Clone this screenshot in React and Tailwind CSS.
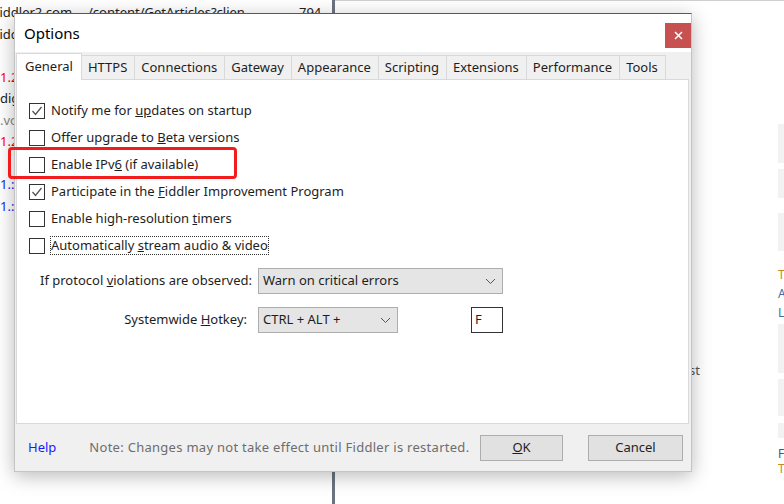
import React from "react";

// Background rows of the session list, mostly hidden behind the dialog
const sessionRows = [
  { text: "fiddler2.com", color: "text-[#222]", shift: true },
  { text: "fiddler2.com", color: "text-[#222]", shift: true },
  { text: "", color: "text-[#222]" },
  { text: "1.2.3", color: "text-[#f00]" },
  { text: "digicert.com", color: "text-[#222]" },
  { text: ".vo", color: "text-[#888]" },
  { text: "1.2.3", color: "text-[#f00]" },
  { text: "", color: "text-[#222]" },
  { text: "1.:", color: "text-[#1a1aff]" },
  { text: "1.:", color: "text-[#1a1aff]" },
];

const tabs = [
  "General",
  "HTTPS",
  "Connections",
  "Gateway",
  "Appearance",
  "Scripting",
  "Extensions",
  "Performance",
  "Tools",
];

function Check({ checked }) {
  return (
    <span className="flex h-[16px] w-[16px] shrink-0 items-center justify-center border border-[#333] bg-white">
      {checked && (
        <svg width="12" height="12" viewBox="0 0 12 12">
          <polyline
            points="1.5,6 4.5,9.5 10.5,2"
            fill="none"
            stroke="#555"
            strokeWidth="1.3"
          />
        </svg>
      )}
    </span>
  );
}

function Chevron() {
  return (
    <svg width="11" height="7" viewBox="0 0 11 7">
      <polyline points="1,1 5.5,5.5 10,1" fill="none" stroke="#555" strokeWidth="1" />
    </svg>
  );
}

function OptionRow({ checked, children, focus }) {
  return (
    <div className="flex h-[27px] items-center">
      <Check checked={checked} />
      <span
        className={
          "ml-[6px] leading-[17px] " +
          (focus ? "outline outline-1 outline-dotted outline-[#333]" : "")
        }
      >
        {children}
      </span>
    </div>
  );
}

export default function App() {
  return (
    <div
      className="relative h-[504px] w-[784px] overflow-hidden bg-white text-[13px] text-[#1e1e1e]"
      style={{ fontFamily: '"Noto Sans", "Open Sans", sans-serif' }}
    >
      {/* background: session list | splitter | inspector */}
      <div className="flex h-full">
        <div className="w-[332px] overflow-hidden">
          <div className="mt-[2px]">
            {sessionRows.map((row, i) => (
              <div key={i} className={"flex h-[21.5px] items-center whitespace-nowrap " + row.color}>
                <span className={"w-[80px] " + (row.shift ? "-ml-[5px]" : "")}>{row.text}</span>
                {i === 0 && (
                  <>
                    <span className="ml-[13px] w-[205px] text-[#222]">/content/GetArticles?clien</span>
                    <span className="ml-[6px] text-[#222]">794</span>
                  </>
                )}
              </div>
            ))}
          </div>
        </div>
        <div className="w-[3px] bg-[#6b7480]" />
        <div className="relative flex-1 border-t border-[#d0d0d0]">
          <div className="absolute left-[354px] top-[360px] text-[#555]">st</div>
          <div className="absolute left-[443px] top-[123px] flex w-[10px] flex-col">
            <div className="h-[39px] bg-[#f2f2f2]" />
            <div className="mt-[6px] h-[29px] bg-[#f2f2f2]" />
            <div className="mt-[15px] h-[38px] bg-[#f2f2f2]" />
            <div className="mt-[14px] flex flex-col text-[12px] leading-[19px]">
              <span className="text-[#c08a2a]">T</span>
              <span className="text-[#3a6ea5]">A</span>
              <span className="text-[#3a6ea5]">L</span>
            </div>
            <div className="mt-[2px] h-[49px] bg-[#f2f2f2]" />
            <div className="mt-[6px] h-[37px] bg-[#f2f2f2]" />
            <div className="mt-[7px] h-[15px] bg-[#f2f2f2]" />
            <div className="mt-[8px] flex flex-col text-[12px] leading-[15px]">
              <span className="text-[#555]">F</span>
              <span className="text-[#c08a2a]">T</span>
            </div>
          </div>
        </div>
      </div>

      {/* Options dialog */}
      <div className="absolute left-[14px] top-[13px] flex h-[459px] w-[678px] flex-col border border-t-[#5a5a5a] border-x-[#c4c4c4] border-b-[#c4c4c4] bg-[#f0f0f0] shadow-[0_4px_18px_rgba(0,0,0,0.28)]">
        {/* title bar */}
        <div className="flex h-[38px] items-start bg-white">
          <span className="ml-[9px] mt-[8px] text-[15px] leading-[22px] text-black">Options</span>
          <button className="ml-auto mt-[9px] flex h-[25px] w-[26px] items-center justify-center bg-[#c75050] text-white">
            <svg width="9" height="9" viewBox="0 0 9 9">
              <path d="M1 1 L8 8 M8 1 L1 8" stroke="#fff" strokeWidth="1.5" />
            </svg>
          </button>
        </div>

        {/* tabs */}
        <div className="flex h-[27px] items-end pl-[1px]">
          {tabs.map((t, i) =>
            i === 0 ? (
              <div
                key={t}
                className="relative z-10 -mb-[1px] flex h-[27px] items-start border border-b-0 border-[#d9d9d9] bg-white px-[8px] pt-[3px]"
              >
                {t}
              </div>
            ) : (
              <div
                key={t}
                className="-ml-[1px] flex h-[24px] items-center border border-b-0 border-[#d9d9d9] bg-[#f0f0f0] pl-[6px] pr-[7px]"
              >
                {t}
              </div>
            )
          )}
        </div>

        {/* general panel */}
        <div className="ml-[1px] mr-[2px] flex flex-1 flex-col border border-[#d9d9d9] bg-white pl-[12px] pt-[17px]">
          <OptionRow checked>
            Notify me for <u>up</u>dates on startup
          </OptionRow>
          <OptionRow>
            Offer upgrade to <u>B</u>eta versions
          </OptionRow>
          <div className="relative">
            <div className="absolute -left-[21px] top-[-4px] h-[32px] w-[229px] rounded-[4px] border-[3px] border-[#f21c1c]" />
            <OptionRow>
              Enable IPv<u>6</u> (if available)
            </OptionRow>
          </div>
          <OptionRow checked>
            Participate in the <u>F</u>iddler Improvement Program
          </OptionRow>
          <OptionRow>
            Enable high-resolution <u>t</u>imers
          </OptionRow>
          <OptionRow focus>
            Automatically <u>s</u>tream audio &amp; video
          </OptionRow>

          <div className="mt-[9px] grid grid-cols-[223px_auto] items-center gap-x-[6px] gap-y-[13px]">
            <span className="whitespace-nowrap text-right">
              If protocol <u>v</u>iolations are observed:
            </span>
            <div className="flex h-[26px] w-[245px] items-center justify-between border border-[#adadad] bg-[#e5e5e5] pl-[4px] pr-[6px]">
              <span>Warn on critical errors</span>
              <Chevron />
            </div>
            <span className="pr-[5px] text-right">
              Systemwide <u>H</u>otkey:
            </span>
            <div className="flex items-center">
              <div className="flex h-[26px] w-[140px] items-center justify-between border border-[#adadad] bg-[#e5e5e5] pl-[4px] pr-[6px]">
                <span>CTRL + ALT +</span>
                <Chevron />
              </div>
              <div className="ml-[73px] flex h-[26px] w-[32px] items-center border border-[#333] bg-white pl-[3px]">
                F
              </div>
            </div>
          </div>
        </div>

        {/* footer */}
        <div className="flex h-[47px] items-center pl-[13px] pr-[8px]">
          <span className="text-[#1a1aff]">Help</span>
          <span className="ml-[33px] tracking-[0.28px] text-[#6d6d6d]">
            Note: Changes may not take effect until Fiddler is restarted.
          </span>
          <button className="ml-auto flex h-[26px] w-[83px] items-center justify-center border border-[#adadad] bg-[#e1e1e1]">
            <u>O</u>K
          </button>
          <button className="ml-[25px] flex h-[26px] w-[95px] items-center justify-center border border-[#adadad] bg-[#e1e1e1]">
            Cancel
          </button>
        </div>
      </div>
    </div>
  );
}
